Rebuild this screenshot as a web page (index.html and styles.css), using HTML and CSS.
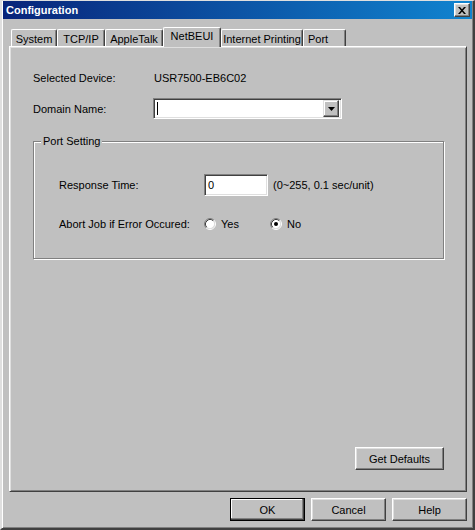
FILE: index.html
```html
<!DOCTYPE html>
<html lang="en">
<head>
    <meta charset="UTF-8">
    <title>Configuration</title>
    <link rel="stylesheet" href="styles.css">
</head>
<body>
    <div class="window">
        <div class="titlebar">
            <span class="title">Configuration</span>
            <button class="close-button">
                <svg width="8" height="7" viewBox="0 0 8 7"><path d="M0 0h2l6 7h-2z M6 0h2l-6 7h-2z" fill="#000"/></svg>
            </button>
        </div>
        <div class="tabs">
            <div class="tab tab-system">System</div>
            <div class="tab tab-tcp">TCP/IP</div>
            <div class="tab tab-apple">AppleTalk</div>
            <div class="tab tab-netbeui active">NetBEUI</div>
            <div class="tab tab-printing">Internet Printing</div>
            <div class="tab tab-port">Port</div>
        </div>
        <div class="panel">
            <div class="row">
                <span class="label">Selected Device:</span>
                <span class="value">USR7500-EB6C02</span>
            </div>
            <div class="row row-domain">
                <span class="label">Domain Name:</span>
                <div class="combo">
                    <span class="caret"></span>
                    <span class="drop-button">
                        <svg width="7" height="4" viewBox="0 0 7 4"><path d="M0 0h7l-3.5 4z" fill="#000"/></svg>
                    </span>
                </div>
            </div>
            <fieldset class="group">
                <legend>Port Setting</legend>
                <div class="group-row">
                    <span class="group-label">Response Time:</span>
                    <div class="textbox">0</div>
                    <span class="hint">(0~255, 0.1 sec/unit)</span>
                </div>
                <div class="group-row group-row-abort">
                    <span class="group-label">Abort Job if Error Occured:</span>
                    <label class="radio">
                        <svg width="12" height="12" viewBox="0 0 12 12">
                            <circle cx="6" cy="6" r="4.5" fill="#fff"/>
                            <path d="M2.11 9.89A5.5 5.5 0 0 1 9.89 2.11" fill="none" stroke="#808080"/>
                            <path d="M9.89 2.11A5.5 5.5 0 0 1 2.11 9.89" fill="none" stroke="#fff"/>
                            <path d="M2.82 9.18A4.5 4.5 0 0 1 9.18 2.82" fill="none" stroke="#404040"/>
                            <path d="M9.18 2.82A4.5 4.5 0 0 1 2.82 9.18" fill="none" stroke="#dfdfdf"/>
                        </svg>
                        Yes
                    </label>
                    <label class="radio">
                        <svg width="12" height="12" viewBox="0 0 12 12">
                            <circle cx="6" cy="6" r="4.5" fill="#fff"/>
                            <path d="M2.11 9.89A5.5 5.5 0 0 1 9.89 2.11" fill="none" stroke="#808080"/>
                            <path d="M9.89 2.11A5.5 5.5 0 0 1 2.11 9.89" fill="none" stroke="#fff"/>
                            <path d="M2.82 9.18A4.5 4.5 0 0 1 9.18 2.82" fill="none" stroke="#404040"/>
                            <path d="M9.18 2.82A4.5 4.5 0 0 1 2.82 9.18" fill="none" stroke="#dfdfdf"/>
                            <circle cx="6" cy="6" r="2" fill="#000"/>
                        </svg>
                        No
                    </label>
                </div>
            </fieldset>
            <button class="btn defaults-button">Get Defaults</button>
        </div>
        <div class="footer">
            <button class="btn default">OK</button>
            <button class="btn">Cancel</button>
            <button class="btn">Help</button>
        </div>
    </div>
</body>
</html>
```

FILE: styles.css
```css
body {
    margin: 0;
    font-family: 'Liberation Sans', Arial, sans-serif;
    font-size: 11px;
    color: #000;
}
.window {
    width: 475px;
    height: 530px;
    box-sizing: border-box;
    background: #c0c0c0;
    border-style: solid;
    border-width: 1px 2px 2px 2px;
    border-color: #dfdfdf #404040 #404040 #dfdfdf;
    box-shadow: inset 1px 0 #fff, inset -1px -1px #808080;
    padding: 0 1px 1px 1px;
    display: flex;
    flex-direction: column;
}
.titlebar {
    height: 18px;
    display: flex;
    align-items: center;
    justify-content: space-between;
    background: linear-gradient(to right, #08247a, #1084d0);
    padding-left: 3px;
}
.title {
    color: #fff;
    font-weight: bold;
    font-size: 11px;
}
.close-button {
    width: 16px;
    height: 14px;
    margin-right: 2px;
    padding: 0;
    display: flex;
    align-items: center;
    justify-content: center;
    background: #c0c0c0;
    border: 1px solid;
    border-color: #fff #404040 #404040 #fff;
    box-shadow: inset -1px -1px #808080, inset 1px 1px #dfdfdf;
}

/* tabs */
.tabs {
    display: flex;
    align-items: flex-end;
    height: 19px;
    margin-top: 8px;
    margin-left: 8px;
}
.tab {
    height: 17px;
    box-sizing: border-box;
    padding-top: 3px;
    line-height: 13px;
    text-align: center;
    border-top: 1px solid #fff;
    border-left: 1px solid #fff;
    border-right: 1px solid #404040;
    border-radius: 2px 2px 0 0;
    box-shadow: inset -1px 0 #808080;
    white-space: nowrap;
}
.tab.active {
    height: 20px;
    margin-bottom: -1px;
    padding-top: 2px;
    background: #c0c0c0;
    position: relative;
    z-index: 1;
}
.tab-system { width: 46px; }
.tab-tcp { width: 48px; }
.tab-apple { width: 58px; }
.tab-netbeui { width: 58px; }
.tab-printing { width: 82px; }
.tab-port {
    width: 43px;
    text-align: left;
    padding-left: 4px;
}

/* main page */
.panel {
    flex: 1;
    margin: 0 5px 0 6px;
    border: 1px solid;
    border-color: #fff #404040 #404040 #fff;
    box-shadow: inset 1px 1px #dfdfdf, inset -1px -1px #808080;
    padding: 20px 22px 21px 23px;
    display: flex;
    flex-direction: column;
}
.row {
    display: flex;
    align-items: center;
    height: 21px;
}
.row-domain {
    margin-top: 10px;
}
.label {
    width: 120px;
}
.value {
    padding-left: 1px;
}
.combo {
    width: 189px;
    height: 21px;
    box-sizing: border-box;
    background: #fff;
    border: 1px solid;
    border-color: #808080 #fff #fff #808080;
    box-shadow: inset 1px 1px #404040, inset -1px -1px #dfdfdf;
    display: flex;
    align-items: center;
    justify-content: space-between;
    padding: 2px;
}
.caret {
    width: 1px;
    height: 13px;
    margin-left: 1px;
    background: #000;
}
.drop-button {
    width: 16px;
    height: 17px;
    box-sizing: border-box;
    display: flex;
    align-items: center;
    justify-content: center;
    background: #c0c0c0;
    border: 1px solid;
    border-color: #dfdfdf #404040 #404040 #dfdfdf;
    box-shadow: inset -1px -1px #808080, inset 1px 1px #fff;
}

/* group box */
.group {
    margin: 16px 0 0 0;
    padding: 26px 0 23px 0;
    border: 1px solid #808080;
    box-shadow: inset 1px 1px #fff, 1px 1px #fff;
}
.group legend {
    margin-left: 7px;
    padding: 0 2px;
    line-height: 13px;
    background: #c0c0c0;
}
.group-row {
    display: flex;
    align-items: center;
    height: 22px;
    padding-left: 25px;
}
.group-row-abort {
    margin-top: 17px;
}
.group-label {
    width: 145px;
}
.textbox {
    width: 64px;
    height: 22px;
    box-sizing: border-box;
    background: #fff;
    border: 1px solid;
    border-color: #808080 #fff #fff #808080;
    box-shadow: inset 1px 1px #404040, inset -1px -1px #dfdfdf;
    padding: 4px 0 0 3px;
    line-height: 13px;
}
.hint {
    margin-left: 5px;
}
.radio {
    width: 66px;
    display: flex;
    align-items: center;
    gap: 5px;
}

/* buttons */
.btn {
    font-family: 'Liberation Sans', Arial, sans-serif;
    font-size: 11px;
    color: #000;
    background: #c0c0c0;
    padding: 0;
    height: 23px;
    width: 75px;
    border: 1px solid;
    border-color: #fff #404040 #404040 #fff;
    box-shadow: inset -1px -1px #808080, inset 1px 1px #dfdfdf;
}
.btn.default {
    border-color: #000;
    box-shadow: inset -1px -1px #404040, inset -2px -2px #808080, inset 1px 1px #fff;
}
.defaults-button {
    width: 89px;
    margin-top: auto;
    align-self: flex-end;
}
.footer {
    display: flex;
    justify-content: flex-end;
    gap: 6px;
    padding: 6px 5px 6px 0;
}
```
